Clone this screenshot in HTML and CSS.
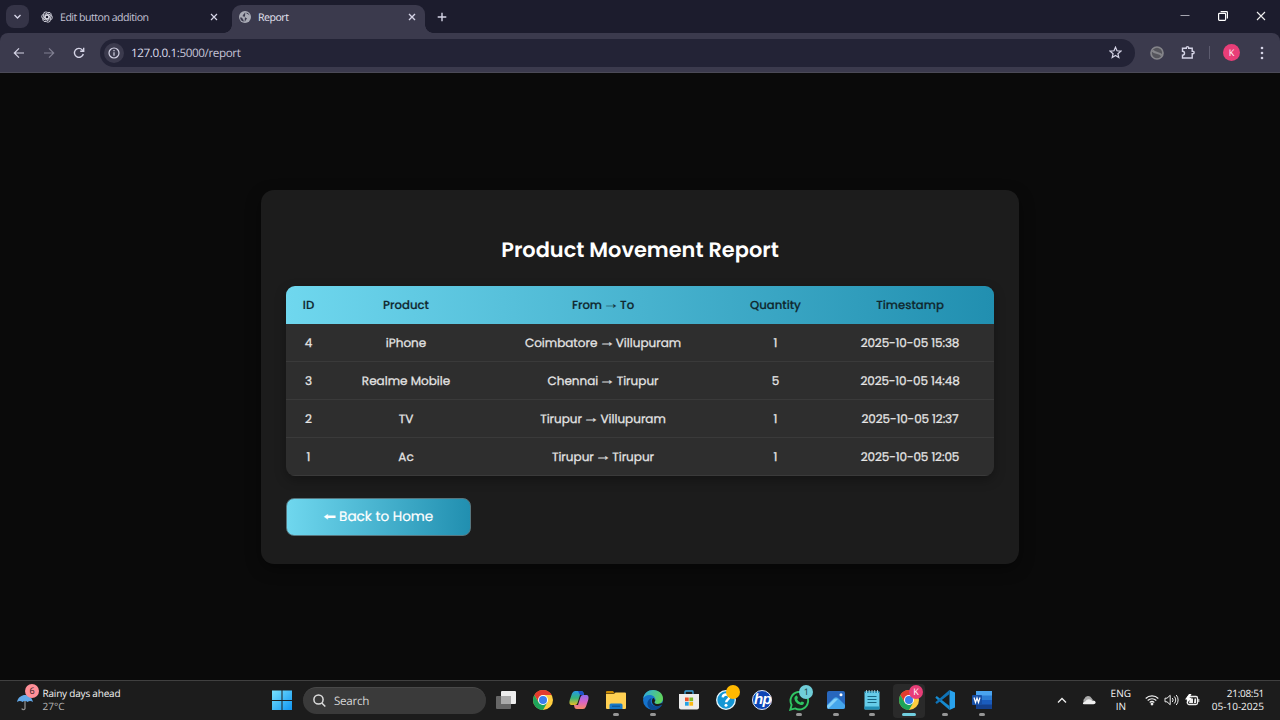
FILE: index.html
```html
<!DOCTYPE html>
<html lang="en">
<head>
<meta charset="utf-8">
<title>Report</title>
<link rel="stylesheet" href="styles.css">
</head>
<body>
<div class="tabstrip">
  <div class="tab-search"><svg width="9" height="9" viewBox="0 0 9 9"><path d="M1.500 3l3 3 3-3" class="ln bold"/></svg></div>
  <div class="tab">
    <svg class="fav" width="12" height="12" viewBox="0 0 24 24" fill="none" stroke="#d5d5df" stroke-width="1.900"><g id="g"><path d="M8.200 14.200V6.500l5.300-3.100a4.600 4.600 0 0 1 6.800 4.800M8.200 9.800l3.800-2.200 3.800 2.200"/></g><use href="#g" transform="rotate(60 12 12)"/><use href="#g" transform="rotate(120 12 12)"/><use href="#g" transform="rotate(180 12 12)"/><use href="#g" transform="rotate(240 12 12)"/><use href="#g" transform="rotate(300 12 12)"/></svg>
    <span class="tab-title">Edit button addition</span>
    <svg class="x" width="8" height="8" viewBox="0 0 8 8"><path d="M1 1l6 6M7 1l-6 6" class="ln"/></svg>
  </div>
  <div class="tab active">
    <svg class="fav" width="12" height="12" viewBox="0 0 12 12"><circle cx="6" cy="6" r="6" fill="#a9abb5"/><path d="M6.300 1.200c-1 .5-.4 1.300-1.500 1.700-.8.4 0 1.300-1 1.500-.6.3.2 1.200 1.300 1.100 1.500 0 .9 1.300 2.100 1.400 1.100.1.900.8 0 1.500-.7.600-.3 1.400-1.600 2.400M1.100 6.500c1.800.1 2.500.4 2.500 1.200 0 .7 1 .6 1 1.500v1.600C2.500 10 1.300 8.700 1.100 6.500zM7.500 1.500c0 1 .3 1.500 1.200 1.600.9 0 .7.900 1.800 1.200C9.900 2.700 9 1.900 7.500 1.500z" fill="#3b3a4d"/></svg>
    <span class="tab-title">Report</span>
    <svg class="x" width="8" height="8" viewBox="0 0 8 8"><path d="M1 1l6 6M7 1l-6 6" class="ln bold"/></svg>
  </div>
  <svg class="plus" width="10" height="10" viewBox="0 0 10 10"><path d="M5 .7v8.600M.7 5h8.600" class="ln bold"/></svg>
  <div class="winctl">
    <svg width="10" height="10" viewBox="0 0 10 10"><path d="M.5 4.500h9" stroke="#a5a5b0"/></svg>
    <svg width="10" height="10" viewBox="0 0 10 10" fill="none" stroke="#fff" stroke-width="1.200"><rect x=".6" y="2.400" width="7" height="7" rx=".8"/><path d="M2.600.7h6q.8 0 .8.800V7.500"/></svg>
    <svg width="10" height="10" viewBox="0 0 10 10"><path d="M1 1l8 8M9 1l-8 8" stroke="#eee" stroke-width="1.100"/></svg>
  </div>
</div>
<div class="toolbar">
  <svg class="nav" width="12" height="12" viewBox="0 0 12 12"><path d="M11 6H1.500M6 1.300L1.300 6 6 10.700" class="ln"/></svg>
  <svg class="nav dim" width="12" height="12" viewBox="0 0 12 12"><path d="M1 6h9.500M6 1.300L10.700 6 6 10.700" class="ln"/></svg>
  <svg class="nav" width="12" height="12" viewBox="0 0 12 12"><path d="M10.300 7A4.500 4.500 0 1 1 9.300 2.900L10.500 4M10.700.8V4.300H7.200" class="ln bold"/></svg>
  <div class="omnibox">
    <div class="info"><svg width="12" height="12" viewBox="0 0 12 12"><circle cx="6" cy="6" r="5" class="ln"/><path d="M6 5.300v3.400M6 3v1.300" class="ln"/></svg></div>
    <span class="url">127.0.0.1<span class="path">:5000/report</span></span>
    <svg class="star" width="13" height="13" viewBox="0 0 13 13"><path d="M6.500 1.200L8 4.800l3.900.3-3 2.600.9 3.800-3.300-2-3.300 2 .9-3.800-3-2.600L5 4.800z" class="ln"/></svg>
  </div>
  <svg class="ext" width="14" height="14" viewBox="0 0 14 14"><circle cx="7" cy="7" r="6" fill="#55555c" stroke="#85858a" stroke-width="1.700"/><path d="M2.500 4.500C5 8 10 6 11.800 9.500" stroke="#85858a" stroke-width="2.200" fill="none"/></svg>
  <svg class="puz" width="15" height="15" viewBox="0 0 15 15"><path d="M1.500 3.200H5.300V2.800A1.200 1.200 0 0 1 7.700 2.800V3.200H11.200V6.300h.7a1.200 1.200 0 0 1 0 2.500h-.7V13H1.500V10.200a2 2 0 0 0 0-4z" class="ln bold"/></svg>
  <span class="sep"></span>
  <span class="avatar">K</span>
  <svg class="dots" width="4" height="14" viewBox="0 0 4 14" fill="#d5d4e6"><circle cx="2" cy="2" r="1.300"/><circle cx="2" cy="7" r="1.300"/><circle cx="2" cy="12" r="1.300"/></svg>
</div>
<main class="page">
  <section class="card">
    <h1>Product Movement Report</h1>
    <table>
      <colgroup><col class="c1"><col class="c2"><col class="c3"><col class="c4"><col class="c5"></colgroup>
      <thead><tr><th>ID</th><th>Product</th><th>From <span class="arr">→</span> To</th><th>Quantity</th><th>Timestamp</th></tr></thead>
      <tbody>
        <tr><td>4</td><td>iPhone</td><td>Coimbatore <span class="arr">→</span> Villupuram</td><td>1</td><td class="time">2025-10-05 15:38</td></tr>
        <tr><td>3</td><td>Realme Mobile</td><td>Chennai <span class="arr">→</span> Tirupur</td><td>5</td><td class="time">2025-10-05 14:48</td></tr>
        <tr><td>2</td><td>TV</td><td>Tirupur <span class="arr">→</span> Villupuram</td><td>1</td><td class="time">2025-10-05 12:37</td></tr>
        <tr><td>1</td><td>Ac</td><td>Tirupur <span class="arr">→</span> Tirupur</td><td>1</td><td class="time">2025-10-05 12:05</td></tr>
      </tbody>
    </table>
    <a class="back"><span class="back-arr">⬅</span>Back to Home</a>
  </section>
</main>
<footer class="taskbar">
  <div class="weather">
    <div class="umb"><svg width="18" height="18" viewBox="0 0 18 18"><path d="M1 9C2 4 6 2 9 2s7 2 8 7c-2-1.500-4-1.500-5.300 0C10 7.500 8 7.500 6.400 9 5 7.500 3 7.500 1 9z" fill="#62a8e8"/><path d="M9 8v7.500a1.700 1.700 0 0 1-3.200 0" fill="none" stroke="#8c8c8c" stroke-width="1.300"/></svg><span class="badge pink">6</span></div>
    <div class="wtext"><span class="cond">Rainy days ahead</span><span class="temp">27°C</span></div>
  </div>
  <div class="slot start"><svg width="20" height="20" viewBox="0 0 20 20"><defs><linearGradient id="w" x1="0" y1="0" x2="20" y2="20" gradientUnits="userSpaceOnUse"><stop stop-color="#7ae4ff"/><stop offset="1" stop-color="#0f94f0"/></linearGradient></defs><path d="M0 .5h9.500V10H0zM10.500.5H20V10H10.500zM0 11h9.500v9H0zM10.500 11H20v9H10.500z" fill="url(#w)"/></svg></div>
  <div class="search"><svg width="13" height="13" viewBox="0 0 13 13" fill="none" stroke="#ddd" stroke-width="1.500"><circle cx="5.500" cy="5.500" r="4.600"/><path d="M8.800 9l3.500 3.500"/></svg><span>Search</span></div>
  <div class="apps">
    <div class="slot"><svg width="20" height="20" viewBox="0 0 20 20"><rect y="6" width="15" height="13" rx="1" fill="#666"/><rect x="5" y="1" width="15" height="13" rx="1" fill="#eee"/><rect x="5" y="6" width="10" height="8" fill="#aaa"/></svg></div>
    <div class="slot"><svg width="20" height="20" viewBox="0 0 20 20"><g id="chrome"><circle cx="10" cy="10" r="10" fill="#ffcd40"/><path d="M10 10L5.670 12.500 1.340 5A10 10 0 0 1 18.660 5H10z" fill="#e33b2e"/><path d="M1.340 5A10 10 0 0 0 10 20L14.330 12.500 10 10 5.670 12.500z" fill="#1da45a"/><circle cx="10" cy="10" r="5" fill="#fff"/><circle cx="10" cy="10" r="4" fill="#3b7ded"/></g></svg></div>
    <div class="slot"><svg width="20" height="20" viewBox="0 0 20 20"><defs><linearGradient id="c1" x2="0" y2="1"><stop stop-color="#2598e8"/><stop offset=".5" stop-color="#35b47c"/><stop offset="1" stop-color="#e9bd24"/></linearGradient><linearGradient id="c2" x2="0" y2="1"><stop stop-color="#8f6ced"/><stop offset=".5" stop-color="#d864c5"/><stop offset="1" stop-color="#f78965"/></linearGradient></defs><path d="M6 1h6c2 0 2.500 1 3 4H11L8.500 13q-.7 2-2.500 2H3C.5 15 0 13 .8 10L3 3.500Q4 1 6 1z" fill="url(#c1)"/><path d="M14 19H8c-2 0-2.500-1-3-4h4l2.500-8q.7-2 2.500-2H17c2.500 0 3 2 2.200 5L17 16.500Q16 19 14 19z" fill="url(#c2)"/><path d="M9 1h3c2 0 2.500 1 3 4h-4z" fill="#1d50c8"/></svg></div>
    <div class="slot run"><svg width="20" height="20" viewBox="0 0 20 20"><path d="M0 2q0-1 1-1h6l2 2.500H0z" fill="#c98a05"/><path d="M0 4h8l1.500-1.500H19q1 0 1 1V18q0 1-1 1H1q-1 0-1-1z" fill="#ffd052"/><path d="M3.500 19v-4q0-1.500 1.500-1.500h10q1.500 0 1.500 1.500v4z" fill="#1678c8"/><path d="M6 16.200h8" stroke="#0c4c87"/></svg></div>
    <div class="slot run"><svg width="20" height="20" viewBox="0 0 20 20"><defs><linearGradient id="e1" y1="0" x2="1" y2=".3"><stop stop-color="#2ca8e8"/><stop offset="1" stop-color="#5fd35c"/></linearGradient></defs><circle cx="10" cy="10" r="10" fill="#1573cc"/><path d="M0 9C1 3 5 0 10 0c6 0 10 4 10 8.500 0 3.500-2.500 5.500-5.500 5.500-2 0-3-.8-3-1.500s.9-1 .9-2.700C12.400 7 9.500 5 6.500 5 3 5 .8 7 0 9z" fill="url(#e1)"/><path d="M9 8c-2.500 2-1.500 8 4 8.200 2.500 0 4-.5 5.600-1.500.5-.3.600.1.300.5C16.500 18.800 13 20.200 9.700 20 5.500 19 4 15.500 4.500 12.500 5 10 7 8.300 9 8z" fill="#0b4a94"/><path d="M12.300 9.700c0 1.700-1 2-.9 2.800.2 1 1.700 1.500 3.100 1.500 2.500 0 4.200-.8 5.500-1.500q-.3 1.200-1.200 2.300c-4 2.500-8.300 1.500-9.600-1.800-.7-2.600 0-4.700 1.400-5 .6.400.9 1.100.9 1.700z" fill="#1c1c1c"/></svg></div>
    <div class="slot"><svg width="20" height="20" viewBox="0 0 20 20"><path d="M6 4V1.700Q6 1 6.700 1h6.600q.7 0 .7.700V4" fill="none" stroke="#3ca4dd" stroke-width="1.300"/><path d="M0 4h20v13.500q0 2-2 2H2q-2 0-2-2z" fill="#ececec"/><path d="M6 7.500h3.700v3.700H6z" fill="#ef5329"/><path d="M10.400 7.500h3.700v3.700h-3.700z" fill="#7db927"/><path d="M6 12h3.700v3.700H6z" fill="#25a2e4"/><path d="M10.400 12h3.700v3.700h-3.700z" fill="#fcb814"/></svg></div>
    <div class="slot"><svg width="20" height="20" viewBox="0 0 20 20"><circle cx="10" cy="10" r="9.300" fill="#1496d4" stroke="#e8f6fc" stroke-width="1.300"/><path d="M6.700 7.300C7 3.500 13.500 3.700 13.200 7.300c-.2 2.300-3 2.400-3 5" fill="none" stroke="#fff" stroke-width="2.400"/><circle cx="10" cy="15.300" r="1.500" fill="#fff"/></svg><span class="badge yellow"></span></div>
    <div class="slot"><svg width="20" height="20" viewBox="0 0 20 20"><circle cx="10" cy="10" r="9.500" fill="#0c45b5" stroke="#d9e4f5"/></svg><span class="hp">hp</span></div>
    <div class="slot run"><svg width="21" height="21" viewBox="0 0 21 21"><path d="M1.300 19.700l1.300-4.800a8.800 8.800 0 1 1 3.500 3.500z" fill="#17251d" stroke="#2fc663" stroke-width="1.900"/><path d="M7 5.700c.6-.3 1.100 0 1.300.6l.6 1.500c.1.500-.8 1.100-.7 1.500.6 1.500 1.800 2.500 3.200 3.100.6.100 1-1.100 1.500-1l1.800.9c.4.200.3.700.1 1.200-.5 1.200-1.700 1.700-2.900 1.500-3.600-.6-6.200-3.500-6.500-6.400-.1-1.200.7-2.500 1.600-2.900z" fill="#2fc663"/></svg><span class="badge teal">1</span></div>
    <div class="slot run"><svg width="20" height="20" viewBox="0 0 20 20"><rect x="1" y="1" width="18" height="18" rx="2" fill="#2867bd"/><path d="M1 15l7-7q2-1.700 4 0l7 7v2q0 2-2 2H3q-2 0-2-2z" fill="#45a6eb"/><path d="M1 16l7-7q2-1 4 0L2 19z" fill="#85d0f7"/><circle cx="15" cy="4.800" r="1.500" fill="#fff"/></svg></div>
    <div class="slot run"><svg width="18" height="20" viewBox="0 0 18 20"><rect x="1.500" y="1.500" width="15" height="18" rx="1" fill="#66cce9"/><path d="M1.500 3V1.500h15V3M1.500 16.500h15v3h-15z" fill="#238fb5"/><path d="M4.500 6.500h9M4.500 9.500h9M4.500 12.500h9" stroke="#176480" stroke-width="1.200"/><path d="M3.500 0v3M6.200 0v3M9 0v3M11.700 0v3M14.500 0v3" stroke="#b5e4ef" stroke-width=".8"/></svg></div>
    <div class="slot run current"><svg width="20" height="20" viewBox="0 0 20 20"><use href="#chrome"/></svg><span class="badge rose">K</span></div>
    <div class="slot run"><svg width="20" height="20" viewBox="0 0 20 20"><path d="M14.500 0L20 2.500v15L14.500 20z" fill="#29a2ed"/><path d="M1.700 6L14.500 16v4L.3 7.800z" fill="#168bd0"/><path d="M1.700 14L14.500 4V0L.3 12.200z" fill="#0f73b8"/></svg></div>
    <div class="slot run"><svg width="20" height="20" viewBox="0 0 20 20"><rect x="4" y="1" width="16" height="18" rx="1" fill="#1a5cbd"/><path d="M4 1h16v5H4z" fill="#4aa4ef"/><path d="M4 5.500h16v4.500H4z" fill="#2b7cd3"/><path d="M4 14.500h16V19H4z" fill="#14408c"/><rect y="5" width="10" height="10" rx="1" fill="#174fa6"/><path d="M2 7.500L3.500 12.500 5 8l1.500 4.500L8 7.500" fill="none" stroke="#fff" stroke-width="1.200"/></svg></div>
  </div>
  <div class="tray">
    <svg class="chev" width="10" height="7" viewBox="0 0 10 7"><path d="M1 5.500l4-4 4 4" fill="none" stroke="#eee" stroke-width="1.300"/></svg>
    <svg class="cloud" width="14" height="10" viewBox="0 0 14 10"><path d="M3 8.500A3 3 0 0 1 2.500 3.500 3.800 3.800 0 0 1 9.500 3L11 5z" fill="#aaa"/><path d="M1 9q-.5-2 2-2.300Q5 3.800 8 4.500q1.500.5 2 1Q13.500 5 13.700 7.500 13.500 9.300 11.500 9.300H2z" fill="#eee"/></svg>
    <div class="lang"><span>ENG</span><span>IN</span></div>
    <svg class="wifi" width="14" height="12" viewBox="0 0 14 12" fill="none" stroke="#eee" stroke-width="1.200"><path d="M.7 4.500a9 9 0 0 1 12.600 0M2.700 6.500a6.200 6.200 0 0 1 8.600 0M4.700 8.500a3.400 3.400 0 0 1 4.600 0"/><circle cx="7" cy="10" r=".8" fill="#eee"/></svg>
    <svg class="snd" width="15" height="12" viewBox="0 0 15 12" fill="none" stroke="#eee"><path d="M1 4.200h2L6.200 1.300v9.400L3 7.800H1zM8.300 4a3 3 0 0 1 0 4M10.300 2.500a5 5 0 0 1 0 7M12.200 1a7.500 7.500 0 0 1 0 10"/></svg>
    <svg class="bat" width="15" height="12" viewBox="0 0 15 12"><rect x="2.500" y="2.500" width="10" height="8" rx="1.500" fill="none" stroke="#eee" stroke-width="1.300"/><path d="M13.300 5h1v3h-1zM5 4.500h3v4.500H4zM9.500 4.500H11v4.500H9z" fill="#eee"/><path d="M4 0L0 5.500h2.500L1.500 9.500 7 3.800H4.500L6.500 0z" fill="#fff"/></svg>
    <div class="clock"><span class="hour">21:08:51</span><span>05-10-2025</span></div>
  </div>
</footer>
</body>
</html>
```
FILE: styles.css
```css
* { box-sizing: border-box; }
html, body { margin: 0; height: 720px; overflow: hidden; }
body { display: flex; flex-direction: column; background: #0a0a0a; color: #eee; font-family: "Open Sans", "Noto Sans", sans-serif; text-rendering: geometricPrecision; }
svg { display: block; flex: none; }
.ln { fill: none; stroke: #d5d4e6; stroke-width: 1.2; }
.bold { stroke-width: 1.4; }

.tabstrip { height: 42px; margin-bottom: -9px; background: #1c1c2d; display: flex; align-items: flex-start; padding: 5px 0 0 6px; flex: none; }
.tab-search { width: 23px; height: 23px; border-radius: 8px; background: #353447; display: flex; align-items: center; justify-content: center; }
.tab { width: 193px; height: 28px; display: flex; align-items: center; padding: 0 9px 4px 7px; margin-left: 5px; font-size: 10.6px; letter-spacing: -0.5px; color: #c3c2d4; }
.tab.active { background: #3b3a4d; border-radius: 9px 9px 0 0; color: #e6e5f2; position: relative; }
.tab.active::before, .tab.active::after { content: ""; position: absolute; bottom: 0; width: 8px; height: 8px; }
.tab.active::before { left: -8px; background: radial-gradient(circle at 0 0, transparent 7.5px, #3b3a4d 8px); }
.tab.active::after { right: -8px; background: radial-gradient(circle at 100% 0, transparent 7.5px, #3b3a4d 8px); }
.tab-title { margin-left: 7px; padding-top: 1px; }
.x { margin-left: auto; }
.plus { margin: 7px 0 0 12px; }
.winctl { margin-left: auto; display: flex; gap: 28px; padding: 6px 14px 0 0; }
.toolbar { height: 40px; flex: none; position: relative; background: #3b3a4d; border-bottom: 1px solid #4b4a57; border-radius: 8px 8px 0 0; display: flex; align-items: center; padding-left: 12.5px; }
.nav { margin-right: 18px; }
.nav.dim { opacity: .45; }
.omnibox { width: 1035px; height: 28px; margin-left: -2.5px; border-radius: 14px; background: #232336; display: flex; align-items: center; padding: 0 13px 0 4px; }
.info { width: 20px; height: 20px; border-radius: 10px; background: #3b3a4d; display: flex; align-items: center; justify-content: center; }
.url { margin-left: 7px; font-size: 11.7px; letter-spacing: -0.4px; color: #dedded; padding-top: 1px; }
.path { color: #c5c4d6; }
.star { margin-left: auto; }
.ext { margin-left: 15px; }
.puz { margin-left: 17px; }
.sep { width: 1px; height: 13px; background: #5c5b6e; margin-left: 13px; }
.avatar { width: 17px; height: 17px; border-radius: 50%; background: #e83e78; color: #fff; font-size: 9px; line-height: 17px; text-align: center; margin-left: 13px; }
.dots { margin-left: 20px; }

.page { height: 607px; flex: none; display: flex; justify-content: center; align-items: flex-start; padding-top: 117px; font-family: Poppins, Inter, sans-serif; }
.card { width: 758px; height: 374px; border-radius: 13px; background: #1c1c1c; padding: 46px 25px 0; box-shadow: 0 5px 15px rgba(0,0,0,.4); }
h1 { margin: 0 0 20px; font-size: 20.9px; line-height: 30px; font-weight: 600; text-align: center; color: #fff; }
table { width: 708px; table-layout: fixed; border-spacing: 0; border-radius: 9px; overflow: hidden; background: #2e2e2e; box-shadow: 0 4px 12px rgba(0,0,0,.3); }
.c1 { width: 45px; } .c2 { width: 150px; } .c3 { width: 244px; } .c4 { width: 101px; } .c5 { width: 168px; }
thead tr { background: linear-gradient(90deg, #6fd7ee, #218fb0); }
th, td { height: 38px; padding: 2px 0 0; text-align: center; white-space: nowrap; line-height: 18px; }
th { font-size: 11.7px; font-weight: 500; color: #10282f; -webkit-text-stroke: .2px #10282f; }
td { font-size: 12px; font-weight: 400; color: #e6e6e6; -webkit-text-stroke: .25px #e6e6e6; border-bottom: 1px solid #3a3a3a; padding-top: 3px; }
.time { letter-spacing: -0.1px; }
.arr { display: inline-block; width: 12px; text-align: center; font-family: "Liberation Serif", serif; font-weight: 400; font-size: 12px; line-height: 1; transform: translateY(-1px) scaleX(1.35); }
.back { margin-top: 22px; width: 185px; height: 38px; border-radius: 8px; border: 1px solid #56767f; background: linear-gradient(90deg, #6fd7ee, #218fb0); display: flex; align-items: center; justify-content: center; font-size: 13.6px; font-weight: 400; -webkit-text-stroke: .2px #fff; color: #fff; }
.back-arr { font-family: "DejaVu Sans", sans-serif; margin-right: 4px; transform: scale(1.1, .75); }

.taskbar { height: 40px; flex: none; background: #1c1c1c; border-top: 1px solid #404040; display: flex; align-items: center; padding-bottom: 1px; }
.weather { width: 263.5px; padding-left: 16px; display: flex; align-items: center; }
.umb { position: relative; width: 18px; height: 18px; margin-right: 8.5px; top: 2px; }
.wtext { display: flex; flex-direction: column; font-size: 10px; line-height: 13px; color: #f2f2f2; padding-bottom: 1px; }
.cond { letter-spacing: -0.2px; }
.temp { color: #b5b5b5; }
.badge { position: absolute; width: 14px; height: 14px; border-radius: 50%; font-size: 9px; line-height: 14px; text-align: center; }
.pink { left: 9px; top: -9px; background: #ff8f98; color: #301a1c; }
.slot { position: relative; width: 36.6px; height: 38px; display: flex; align-items: center; justify-content: center; flex: none; }
.search { width: 183px; height: 27px; margin-left: 2.9px; border-radius: 14px; background: #3a3a3a; border-top: 1px solid #484848; display: flex; align-items: center; padding-left: 10px; gap: 8px; font-size: 11.7px; letter-spacing: -0.3px; color: #d5d5d5; }
.apps { display: flex; margin-left: 2px; }
.run::after { content: ""; position: absolute; left: 50%; bottom: 3px; width: 6px; height: 3px; margin-left: -3px; border-radius: 2px; background: #969696; }
.current::before { content: ""; position: absolute; inset: 3px 2px 1px; border-radius: 4px; background: #2a2a2a; z-index: -1; }
.current { z-index: 0; }
.current::after { width: 14px; margin-left: -7px; background: #72cfe0; }
.yellow { right: 4px; top: 4px; background: #ffb900; }
.teal { right: 4px; top: 4px; background: #70cdd8; color: #15373c; }
.rose { right: 4px; top: 4px; background: #e83e78; color: #fff; }
.hp { position: absolute; font: italic 700 15px/16px "Liberation Sans", sans-serif; color: #fff; letter-spacing: -0.8px; }
.tray { flex: 1; display: flex; align-items: center; color: #f2f2f2; font-size: 10px; line-height: 13px; padding-right: 16px; }
.chev { margin-left: 56.5px; }
.cloud { margin-left: 15px; }
.lang { width: 24px; margin-left: 13px; display: flex; flex-direction: column; align-items: center; padding-bottom: 1px; }
.wifi { margin-left: 12px; }
.snd { margin-left: 5px; }
.bat { margin-left: 6px; }
.clock { margin-left: auto; display: flex; flex-direction: column; align-items: flex-end; padding-bottom: 1px; }
.hour { letter-spacing: -0.3px; }
```
